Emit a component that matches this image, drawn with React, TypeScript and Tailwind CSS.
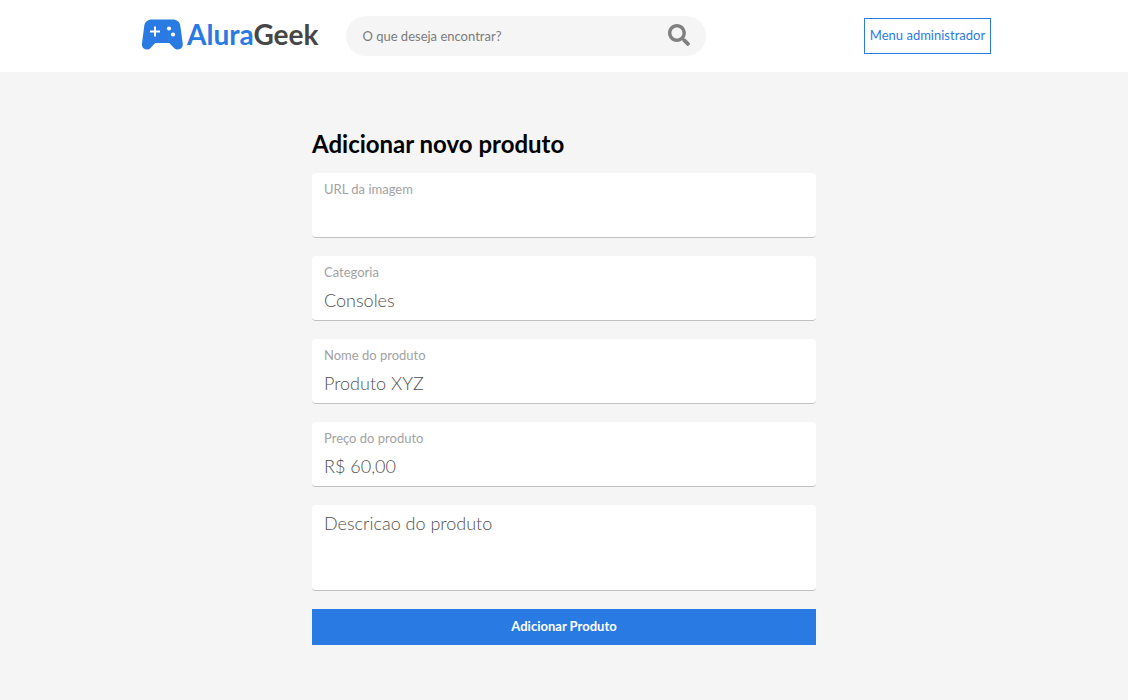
import { FaSearch } from "react-icons/fa";

type FieldProps = { id: string; label: string; placeholder?: string };

function Field({ id, label, placeholder }: FieldProps) {
  return (
    <div className="flex h-[65px] flex-col rounded border-b border-[#c0c0c0] bg-white px-3 pt-2">
      <label htmlFor={id} className="text-[13px] leading-4 text-[#a2a2a2]">
        {label}
      </label>
      <input
        id={id}
        type="text"
        placeholder={placeholder}
        className="mt-2 h-6 w-full bg-transparent text-lg leading-6 font-light text-[#464646] outline-none placeholder:text-[#505050]"
      />
    </div>
  );
}

function Logo() {
  return (
    <a href="#" aria-label="AluraGeek" className="flex items-center gap-1 pb-1">
      <svg viewBox="0 0 42 31" className="h-[31px] w-[42px]" aria-hidden="true">
        <path
          fill="#2a7ae4"
          d="M11 0.500h20.500c4.500 0 7.200 2.300 7.800 6.200l2.400 17.500c.5 3.800-1.500 6.300-4.700 6.300-1.500 0-2.800-.5-3.900-1.600L28.200 24h-14L9.600 28.900c-1.100 1.100-2.400 1.600-3.900 1.600-3.200 0-5.200-2.500-4.700-6.300L3.300 6.700C3.900 2.800 6.500.5 11 .5Z"
        />
        <path stroke="#fff" strokeWidth="2" d="M14 7.500v10M9 12.500h10" />
        <circle cx="28" cy="9.500" r="2.100" fill="#fff" />
        <circle cx="32" cy="15.500" r="2.100" fill="#fff" />
      </svg>
      <span className="text-[28px] leading-8 font-bold text-[#464646]">
        <span className="text-[#2a7ae4]">Alura</span>Geek
      </span>
    </a>
  );
}

export default function App() {
  return (
    <div className="min-h-screen bg-[#f5f5f5] font-['Lato','Open_Sans',sans-serif]">
      <header className="bg-white">
        <div className="mx-auto flex h-18 max-w-[854px] items-center justify-between pl-1">
          <div className="flex items-center gap-7">
            <Logo />
            <form role="search" className="flex h-10 w-[360px] items-center rounded-full bg-[#f5f5f5] px-4">
              <input
                type="search"
                aria-label="Buscar"
                placeholder="O que deseja encontrar?"
                className="min-w-0 flex-1 bg-transparent text-[13px] leading-4 outline-none placeholder:text-[#7b7b7b]"
              />
              <button type="button" aria-label="Pesquisar" className="pb-0.5">
                <FaSearch className="size-[22px] text-[#808080]" />
              </button>
            </form>
          </div>
          <a
            href="#"
            className="flex h-9 w-[127px] items-center justify-center border border-[#2a7ae4] text-[13px] whitespace-nowrap text-[#2a7ae4]"
          >
            Menu administrador
          </a>
        </div>
      </header>

      <main className="mx-auto w-[504px] max-w-full pt-14">
        <h1 className="text-2xl leading-8 font-bold text-black">Adicionar novo produto</h1>
        <form className="mt-[13px] flex flex-col gap-[18px]">
          <Field id="url" label="URL da imagem" />
          <Field id="categoria" label="Categoria" placeholder="Consoles" />
          <Field id="nome" label="Nome do produto" placeholder="Produto XYZ" />
          <Field id="preco" label="Preço do produto" placeholder="R$ 60,00" />
          <textarea
            aria-label="Descricao do produto"
            placeholder="Descricao do produto"
            className="h-[86px] resize-none rounded border-b border-[#c0c0c0] bg-white px-3 pt-1.5 text-lg leading-6 font-light outline-none placeholder:text-[#505050]"
          />
          <button type="submit" className="h-9 bg-[#2a7ae4] text-[13px] font-bold text-white">
            Adicionar Produto
          </button>
        </form>
      </main>
    </div>
  );
}
